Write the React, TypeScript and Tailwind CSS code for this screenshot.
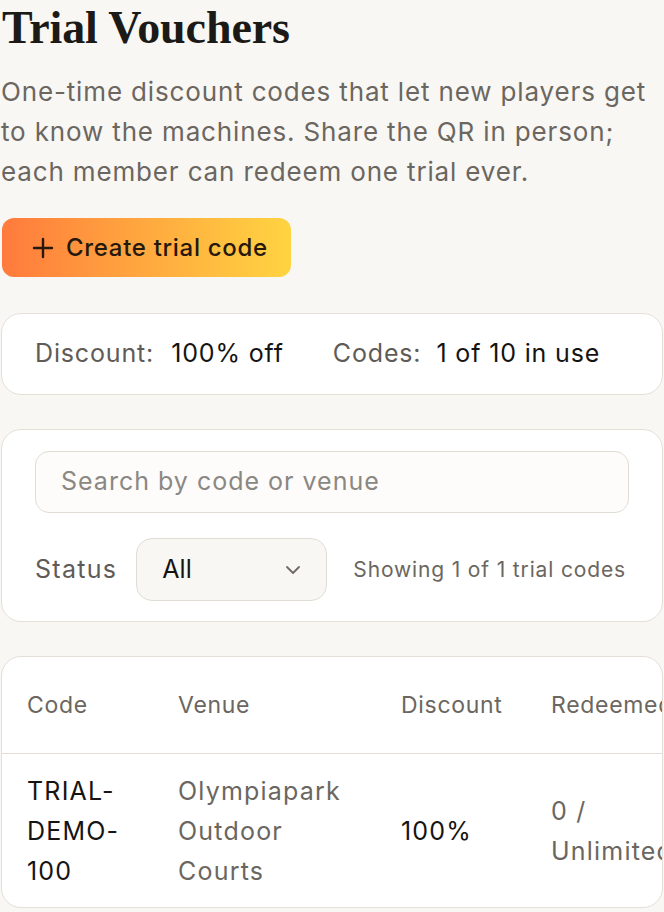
import React from "react";

function Plus() {
  return (
    <svg width="22" height="22" viewBox="0 0 22 22" fill="none" stroke="currentColor" strokeWidth="2.4" strokeLinecap="round">
      <path d="M11 2v18M2 11h18" />
    </svg>
  );
}

function Chevron() {
  return (
    <svg width="16" height="10" viewBox="0 0 16 10" fill="none" stroke="#6f6a64" strokeWidth="1.8" strokeLinecap="round" strokeLinejoin="round">
      <path d="M2 2l6 6 6-6" />
    </svg>
  );
}

export default function App() {
  return (
    <div className="min-h-screen w-[664px] overflow-hidden bg-[#f8f7f4] font-['Inter',sans-serif] text-[#1a1815]">
      <div className="px-[1px]">
        <h1 className="pl-[1px] font-['Liberation_Serif',serif] text-[46px] font-bold leading-[56px] tracking-[-0.1px] text-[#1c1a17]">
          Trial Vouchers
        </h1>
        <p className="mt-[16px] text-[26px] leading-[40px] text-[#6b6660] tracking-[0.85px]">
          One-time discount codes that let new players get
          <br />
          to know the machines. Share the QR in person;
          <br />
          each member can redeem one trial ever.
        </p>
        <button className="mt-[26px] ml-[1px] flex h-[59px] w-[289px] items-center gap-[12px] rounded-[12px] bg-gradient-to-r from-[#ff7a3c] to-[#ffd441] pl-[30px] text-[24px] font-medium tracking-[0.7px] text-[#26180c]">
          <Plus />
          <span>Create trial code</span>
        </button>

        <div className="mt-[36px] flex h-[82px] items-center rounded-[20px] border border-[#e4e0d8] bg-white pl-[33px] text-[25px] tracking-[0.85px]">
          <span className="text-[#5f5b56]">Discount:</span>
          <span className="ml-[17px] text-[#161412]">100% off</span>
          <span className="ml-[49px] text-[#5f5b56]">Codes:</span>
          <span className="ml-[15px] text-[#161412]">1 of 10 in use</span>
        </div>

        <div className="mt-[34px] rounded-[20px] border border-[#e4e0d8] bg-white px-[33px] pt-[21px] pb-[20px]">
          <div className="flex h-[62px] items-center rounded-[14px] border border-[#e2ddd4] bg-[#fdfcfb] pl-[25px] text-[25px] tracking-[1px] text-[#8b8782]">
            Search by code or venue
          </div>
          <div className="mt-[25px] flex items-center">
            <span className="text-[25px] tracking-[1.3px] text-[#5f5b56]">Status</span>
            <div className="ml-[19px] flex h-[63px] w-[191px] items-center justify-between rounded-[16px] border border-[#e2ddd4] bg-[#f8f7f3] pl-[25px] pr-[25px] text-[25px] text-[#161412]">
              <span>All</span>
              <Chevron />
            </div>
            <span className="ml-[26px] text-[21px] tracking-[0.85px] text-[#6b6660]">Showing 1 of 1 trial codes</span>
          </div>
        </div>

        <div className="mt-[34px] overflow-hidden rounded-[20px] border border-[#e4e0d8] bg-white">
          <div className="flex h-[97px] items-center whitespace-nowrap border-b border-[#e4e0d8] text-[23px] tracking-[0.7px] text-[#6b6660]">
            <div className="w-[151px] shrink-0 pl-[25px]">Code</div>
            <div className="w-[223px] shrink-0 pl-[25px]">Venue</div>
            <div className="w-[150px] shrink-0 pl-[25px]">Discount</div>
            <div className="w-[180px] shrink-0 pl-[25px]">Redeemed</div>
          </div>
          <div className="flex h-[153px] items-center whitespace-nowrap text-[25px] leading-[40px] tracking-[1.2px]">
            <div className="w-[151px] shrink-0 pl-[25px] text-[#161412]">
              TRIAL-
              <br />
              DEMO-
              <br />
              100
            </div>
            <div className="w-[223px] shrink-0 pl-[25px] text-[#6b6660]">
              Olympiapark
              <br />
              Outdoor
              <br />
              Courts
            </div>
            <div className="w-[150px] shrink-0 pl-[25px] text-[#161412]">100%</div>
            <div className="w-[180px] shrink-0 pl-[25px] text-[#6b6660]">
              0 /
              <br />
              Unlimited
            </div>
          </div>
        </div>
      </div>
    </div>
  );
}
